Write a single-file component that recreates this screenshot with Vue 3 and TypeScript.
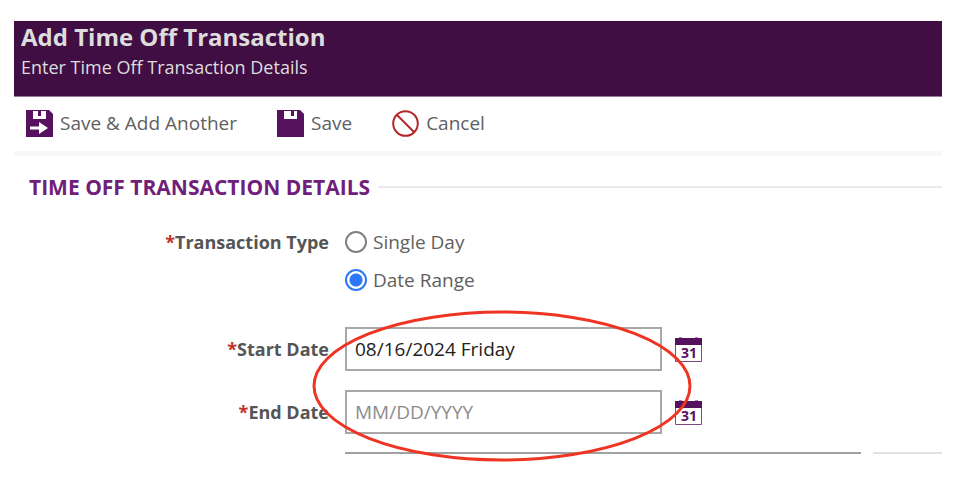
<script setup lang="ts">
import { ref } from 'vue'

type TransactionType = 'single' | 'range'

interface DateField {
  id: string
  label: string
  value: string
}

const transactionType = ref<TransactionType>('range')
const options: { value: TransactionType; label: string }[] = [
  { value: 'single', label: 'Single Day' },
  { value: 'range', label: 'Date Range' },
]
const dates = ref<DateField[]>([
  { id: 'start-date', label: 'Start Date', value: '08/16/2024 Friday' },
  { id: 'end-date', label: 'End Date', value: '' },
])
</script>

<template>
  <main class="page">
    <header class="banner">
      <h1>Add Time Off Transaction</h1>
      <p>Enter Time Off Transaction Details</p>
    </header>

    <nav class="toolbar">
      <button type="button">
        <svg viewBox="0 0 27 27" aria-hidden="true">
          <path fill="#56125f" d="M0 0H23L27 4V27H0Z" />
          <path fill="#fff" d="M7 1H12V6H15V1H20V9H7Z" />
          <path fill="#fff" d="M4 16.5H13V12L22 18L13 24V19.5H4Z" />
        </svg>
        <span>Save &amp; Add Another</span>
      </button>
      <button type="button">
        <svg viewBox="0 0 27 27" aria-hidden="true">
          <path fill="#56125f" d="M0 0H23L27 4V27H0Z" />
          <path fill="#fff" d="M7 1H14V6H17V1H20V9H7Z" />
        </svg>
        <span>Save</span>
      </button>
      <button type="button">
        <svg viewBox="0 0 27 27" aria-hidden="true" fill="none" stroke="#b3262a" stroke-width="2">
          <circle cx="13.5" cy="13.5" r="12.3" />
          <path d="M5 5L22 22" />
        </svg>
        <span>Cancel</span>
      </button>
    </nav>

    <form class="details" @submit.prevent>
      <h2>TIME OFF TRANSACTION DETAILS</h2>

      <div class="row type-row" role="radiogroup" aria-labelledby="type-label">
        <span id="type-label" class="label"><i>*</i>Transaction Type</span>
        <div class="options">
          <label v-for="option in options" :key="option.value">
            <input v-model="transactionType" type="radio" name="type" :value="option.value" />
            <span>{{ option.label }}</span>
          </label>
        </div>
      </div>

      <div class="dates">
        <div v-for="field in dates" :key="field.id" class="row date-row">
          <label class="label" :for="field.id"><i>*</i>{{ field.label }}</label>
          <div class="field">
            <input :id="field.id" v-model="field.value" type="text" placeholder="MM/DD/YYYY" />
            <button type="button" class="calendar">
              <svg viewBox="0 0 27 27" aria-hidden="true">
                <path fill="#56125f" d="M0 2H27V9H0Z" />
                <path fill="#a582aa" d="M4 1H7V2H4ZM20 1H23V2H20Z" />
                <path fill="none" stroke="#7d4784" d="M0.5 9V25.5H26.5V9" />
                <text x="14" y="22" text-anchor="middle">31</text>
              </svg>
            </button>
          </div>
        </div>
        <svg class="highlight" viewBox="0 0 380 152" aria-hidden="true">
          <ellipse cx="190" cy="76" rx="188" ry="74" />
        </svg>
      </div>

      <div class="row next-row">
        <span></span>
        <div class="edges"><hr class="box-edge" /><hr class="divider" /></div>
      </div>
    </form>
  </main>
</template>

<style>
body {
  background: #fff;
}
</style>

<style scoped>
* {
  box-sizing: border-box;
}
.page {
  padding: 21px 18px 40px 14px;
  font-family: "Open Sans", "Noto Sans", sans-serif;
  font-size: 19px;
  line-height: 26px;
  color: #606060;
}
h1,
h2,
p,
hr {
  margin: 0;
}
button {
  padding: 0;
  border: 0;
  background: none;
  font: inherit;
  color: inherit;
}
.banner {
  padding: 0 7px 15px;
  border-bottom: 1px solid #967a99;
  background: #410e43;
  color: #ddd;
}
h1 {
  font-size: 24px;
  line-height: 32px;
}
.banner p {
  font-size: 18px;
  line-height: 28px;
}
.toolbar {
  display: flex;
  gap: 40px;
  padding: 11px 12px 13px;
  border-bottom: 5px solid #f8f8f6;
}
.toolbar button {
  display: flex;
  align-items: center;
  gap: 7px;
  height: 30px;
}
.toolbar svg {
  width: 27px;
  height: 27px;
}
h2 {
  display: flex;
  align-items: center;
  gap: 8px;
  padding-left: 15px;
  font-size: 21px;
  line-height: 26px;
  color: #70207a;
}
h2::after {
  content: "";
  flex: 1;
  height: 2px;
  background: #eaeaea;
}
.details {
  padding-top: 18px;
}
.row {
  display: grid;
  grid-template-columns: 315px 1fr;
  gap: 16px;
}
.label {
  font-size: 18px;
  font-weight: 700;
  text-align: right;
  color: #555;
}
.label i {
  font-style: normal;
  color: #c03028;
}
.type-row {
  padding-top: 29px;
}
.options {
  display: flex;
  flex-direction: column;
  gap: 12px;
  align-items: flex-start;
}
.options label {
  display: flex;
  align-items: center;
  gap: 6px;
}
.options input {
  appearance: none;
  width: 22px;
  height: 22px;
  margin: 0;
  border: 2px solid #808080;
  border-radius: 50%;
  background: #fff;
}
.options input:checked {
  border-color: #2f78f5;
  background: radial-gradient(circle, #2f78f5 6px, #fff 7px);
}
.dates {
  position: relative;
  display: flex;
  flex-direction: column;
  gap: 19px;
  padding-top: 34px;
}
.date-row {
  align-items: center;
}
.field {
  display: flex;
  align-items: center;
  gap: 13px;
}
.field input {
  flex: 0 1 317px;
  min-width: 0;
  height: 44px;
  padding: 0 8px;
  border: 2px solid #a8a8a8;
  border-radius: 0;
  background: #fff;
  font: inherit;
  color: #222;
}
.field input::placeholder {
  color: #8c8c8c;
  opacity: 1;
}
.calendar {
  display: flex;
}
.calendar svg {
  width: 27px;
  height: 27px;
}
.calendar text {
  font: 700 14px "Open Sans", sans-serif;
  fill: #56125f;
}
.highlight {
  position: absolute;
  left: 298px;
  top: 17px;
  width: 380px;
  height: 152px;
  pointer-events: none;
}
.highlight ellipse {
  fill: none;
  stroke: #ee3524;
  stroke-width: 3;
}
.next-row {
  padding-top: 18px;
}
.edges {
  display: flex;
  gap: 12px;
}
hr {
  border: 0;
  height: 2px;
}
.box-edge {
  flex: 516;
  background: #a0a0a0;
}
.divider {
  flex: 69;
  background: #e2e2dc;
}
</style>
